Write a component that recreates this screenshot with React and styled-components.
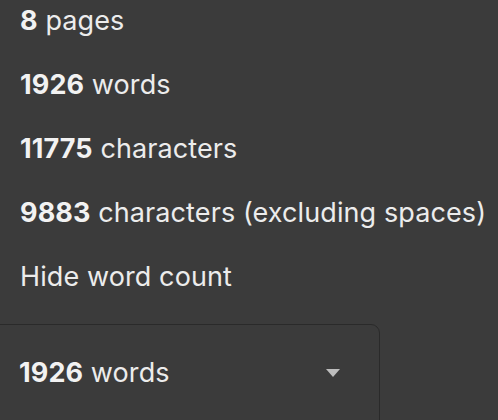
import React from "react";
import styled, { createGlobalStyle } from "styled-components";

const Global = createGlobalStyle`
  html, body { margin: 0; padding: 0; background: #3b3b3b; }
  body { width: 498px; height: 420px; overflow: hidden; font-family: Inter, "Open Sans", sans-serif; }
`;

const Page = styled.div`
  display: flex;
  flex-direction: column;
`;

const StatList = styled.ul`
  list-style: none;
  margin: 0;
  padding: 0 0 0 20px;
  display: flex;
  flex-direction: column;
  gap: 22px;
`;

const Stat = styled.li`
  height: 42px;
  line-height: 42px;
  font-size: 27px;
  letter-spacing: 0.1px;
  color: #ececec;
  white-space: nowrap;
`;

const Num = styled.b`
  font-weight: 700;
  color: #f2f2f2;
`;

const Select = styled.div`
  margin: 26px 0 0 -10px;
  width: 390px;
  box-sizing: border-box;
  height: 110px;
  border: 1px solid #2a2a2a;
  border-radius: 9px;
  padding: 30px 38px 0 28px;
  display: flex;
  align-items: flex-start;
  justify-content: space-between;
`;

const SelectText = styled.span`
  height: 36px;
  line-height: 36px;
  font-size: 27px;
  letter-spacing: 0.1px;
  color: #ececec;
`;

const Caret = styled.svg`
  margin-top: 14px;
  flex: none;
`;

export default function App() {
  const stats = [
    ["8", "pages"],
    ["1926", "words"],
    ["11775", "characters"],
    ["9883", "characters (excluding spaces)"],
  ];
  return (
    <Page>
      <Global />
      <StatList>
        {stats.map(([n, l]) => (
          <Stat key={l}>
            <Num>{n}</Num> {l}
          </Stat>
        ))}
        <Stat>Hide word count</Stat>
      </StatList>
      <Select>
        <SelectText>
          <Num>1926</Num> words
        </SelectText>
        <Caret width="16" height="8" viewBox="0 0 16 8">
          <path d="M1 0 L15 0 L8 8 Z" fill="#bdbdbd" />
        </Caret>
      </Select>
    </Page>
  );
}
